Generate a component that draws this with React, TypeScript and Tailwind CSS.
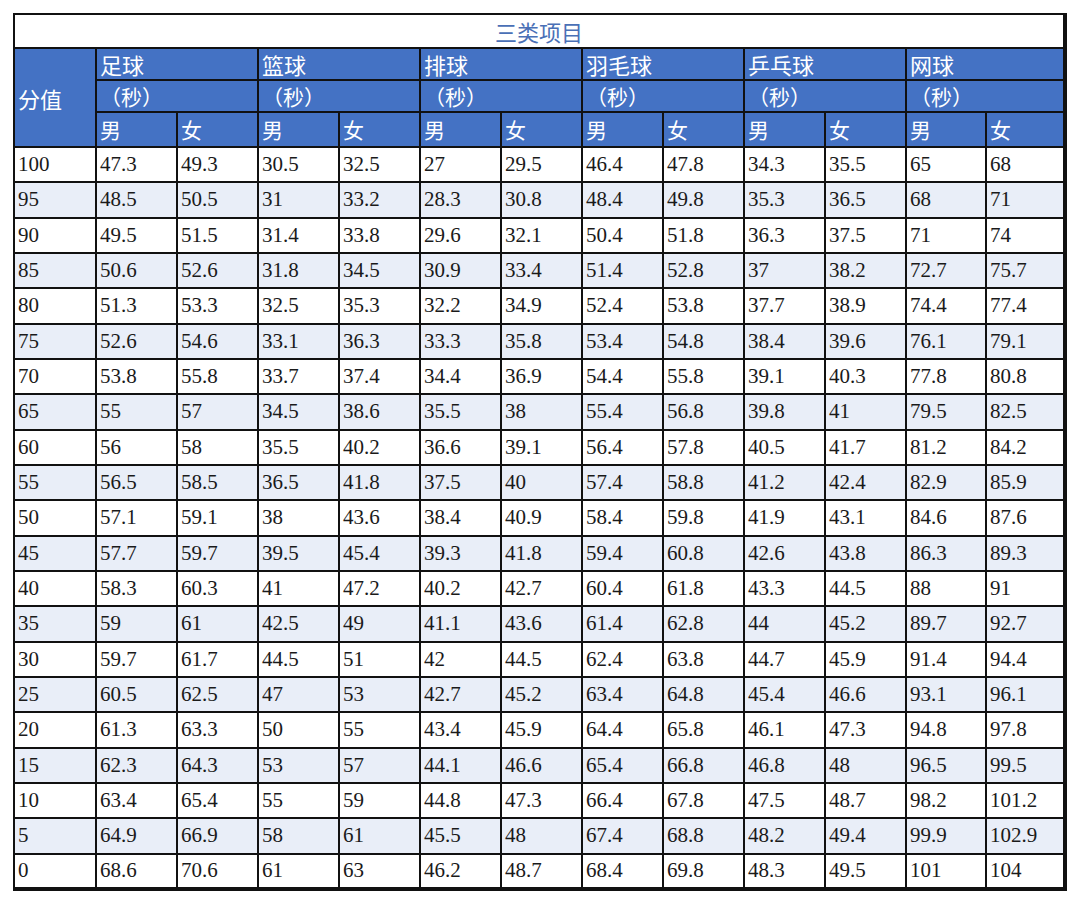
const SPORTS = ['足球', '篮球', '排球', '羽毛球', '乒乓球', '网球']

const ROWS: string[][] = [
  ['100', '47.3', '49.3', '30.5', '32.5', '27', '29.5', '46.4', '47.8', '34.3', '35.5', '65', '68'],
  ['95', '48.5', '50.5', '31', '33.2', '28.3', '30.8', '48.4', '49.8', '35.3', '36.5', '68', '71'],
  ['90', '49.5', '51.5', '31.4', '33.8', '29.6', '32.1', '50.4', '51.8', '36.3', '37.5', '71', '74'],
  ['85', '50.6', '52.6', '31.8', '34.5', '30.9', '33.4', '51.4', '52.8', '37', '38.2', '72.7', '75.7'],
  ['80', '51.3', '53.3', '32.5', '35.3', '32.2', '34.9', '52.4', '53.8', '37.7', '38.9', '74.4', '77.4'],
  ['75', '52.6', '54.6', '33.1', '36.3', '33.3', '35.8', '53.4', '54.8', '38.4', '39.6', '76.1', '79.1'],
  ['70', '53.8', '55.8', '33.7', '37.4', '34.4', '36.9', '54.4', '55.8', '39.1', '40.3', '77.8', '80.8'],
  ['65', '55', '57', '34.5', '38.6', '35.5', '38', '55.4', '56.8', '39.8', '41', '79.5', '82.5'],
  ['60', '56', '58', '35.5', '40.2', '36.6', '39.1', '56.4', '57.8', '40.5', '41.7', '81.2', '84.2'],
  ['55', '56.5', '58.5', '36.5', '41.8', '37.5', '40', '57.4', '58.8', '41.2', '42.4', '82.9', '85.9'],
  ['50', '57.1', '59.1', '38', '43.6', '38.4', '40.9', '58.4', '59.8', '41.9', '43.1', '84.6', '87.6'],
  ['45', '57.7', '59.7', '39.5', '45.4', '39.3', '41.8', '59.4', '60.8', '42.6', '43.8', '86.3', '89.3'],
  ['40', '58.3', '60.3', '41', '47.2', '40.2', '42.7', '60.4', '61.8', '43.3', '44.5', '88', '91'],
  ['35', '59', '61', '42.5', '49', '41.1', '43.6', '61.4', '62.8', '44', '45.2', '89.7', '92.7'],
  ['30', '59.7', '61.7', '44.5', '51', '42', '44.5', '62.4', '63.8', '44.7', '45.9', '91.4', '94.4'],
  ['25', '60.5', '62.5', '47', '53', '42.7', '45.2', '63.4', '64.8', '45.4', '46.6', '93.1', '96.1'],
  ['20', '61.3', '63.3', '50', '55', '43.4', '45.9', '64.4', '65.8', '46.1', '47.3', '94.8', '97.8'],
  ['15', '62.3', '64.3', '53', '57', '44.1', '46.6', '65.4', '66.8', '46.8', '48', '96.5', '99.5'],
  ['10', '63.4', '65.4', '55', '59', '44.8', '47.3', '66.4', '67.8', '47.5', '48.7', '98.2', '101.2'],
  ['5', '64.9', '66.9', '58', '61', '45.5', '48', '67.4', '68.8', '48.2', '49.4', '99.9', '102.9'],
  ['0', '68.6', '70.6', '61', '63', '46.2', '48.7', '68.4', '69.8', '48.3', '49.5', '101', '104'],
]

const COLS = [82, 81, 81, 81, 81, 81, 81, 81, 81, 81, 81, 80, 79]

const serif = "font-['Liberation_Serif','Noto_Sans_CJK_SC',serif]"
const cjk = "font-['Noto_Sans_CJK_SC','Liberation_Serif',sans-serif]"

export default function App() {
  return (
    <div className="min-h-[904px] bg-white pl-[13px] pt-[13px]">
      <table className={`table-fixed border-collapse border-t-2 border-l-2 border-r-[4px] border-b-[4px] border-[#111] ${serif}`}>
        <colgroup>
          {COLS.map((w, i) => (
            <col key={i} style={{ width: w }} />
          ))}
        </colgroup>
        <thead>
          <tr className="h-[34px]">
            <th colSpan={13} className={`border-2 border-[#111] bg-white p-0 text-center text-[22px] font-normal leading-none text-[#4a70b6] ${cjk}`}>
              三类项目
            </th>
          </tr>
          <tr className="h-[32px] bg-[#4472c4] text-white">
            <th rowSpan={3} className={`border-2 border-[#111] px-[3px] text-left align-middle text-[22px] font-normal leading-none ${cjk}`}>
              分值
            </th>
            {SPORTS.map((s) => (
              <th key={s} colSpan={2} className={`border-2 border-[#111] px-[3px] text-left text-[22px] font-normal leading-none ${cjk}`}>
                {s}
              </th>
            ))}
          </tr>
          <tr className="h-[32px] bg-[#4472c4] text-white">
            {SPORTS.map((s) => (
              <th key={s} colSpan={2} className={`border-2 border-[#111] px-[3px] text-left text-[21px] font-normal leading-none ${cjk}`}>
                （秒）
              </th>
            ))}
          </tr>
          <tr className="h-[35px] bg-[#4472c4] text-white">
            {SPORTS.flatMap((s) => [
              <th key={s + 'm'} className={`border-2 border-[#111] px-[3px] text-left text-[21px] font-normal leading-none ${cjk}`}>男</th>,
              <th key={s + 'f'} className={`border-2 border-[#111] px-[3px] text-left text-[21px] font-normal leading-none ${cjk}`}>女</th>,
            ])}
          </tr>
        </thead>
        <tbody>
          {ROWS.map((r, i) => (
            <tr key={r[0]} className={`h-[35.33px] ${i % 2 === 1 ? 'bg-[#e9eef8]' : 'bg-white'}`}>
              {r.map((v, j) => (
                <td key={j} className="border-2 border-[#111] px-[3px] text-left align-middle text-[21px] leading-none text-[#1a1a1a]">
                  {v}
                </td>
              ))}
            </tr>
          ))}
        </tbody>
      </table>
    </div>
  )
}
